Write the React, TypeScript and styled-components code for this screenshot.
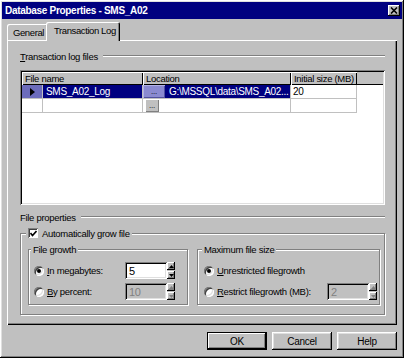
import React from "react";
import styled, { createGlobalStyle, css } from "styled-components";

const face = "#c0c0c0";
const shadow = "#808080";
const dark = "#000";
const hilite = "#fff";
const light = "#dfdfdf";
const navy = "#000080";

const GlobalStyle = createGlobalStyle`
  html, body { margin: 0; padding: 0; background: ${face}; }
  body { width: 404px; height: 358px; overflow: hidden; font-family: "Liberation Sans", Arial, sans-serif; }
  * { box-sizing: border-box; }
`;

const raised = css`
  box-shadow: inset -1px -1px ${dark}, inset 1px 1px ${hilite}, inset -2px -2px ${shadow}, inset 2px 2px ${light};
`;
const raisedThin = css`
  box-shadow: inset -1px -1px ${dark}, inset 1px 1px ${hilite}, inset -2px -2px ${shadow};
`;
const sunken = css`
  box-shadow: inset 1px 1px ${shadow}, inset -1px -1px ${hilite}, inset 2px 2px ${dark}, inset -2px -2px ${light};
`;

const Window = styled.div`
  width: 404px;
  height: 358px;
  padding: 2px;
  background: ${face};
  ${raised}
  display: flex;
  flex-direction: column;
  font-size: 9.5px;
  letter-spacing: -0.3px;
  color: #000;
`;

const TitleBar = styled.div`
  height: 17px;
  background: ${navy};
  color: #fff;
  display: flex;
  align-items: center;
  justify-content: space-between;
  padding: 0 2px 0 3px;
`;

const TitleText = styled.span`
  font-weight: bold;
  font-size: 10px;
  letter-spacing: -0.3px;
`;

const CloseButton = styled.div`
  width: 12px;
  height: 11px;
  background: ${face};
  ${raisedThin}
  display: flex;
  align-items: center;
  justify-content: center;
  padding-bottom: 1px;
`;

const Body = styled.div`
  flex: 1;
  display: flex;
  flex-direction: column;
  padding: 3px 5px 0 5px;
`;

const TabStrip = styled.div`
  height: 18px;
  display: flex;
  align-items: flex-end;
`;

const Tab = styled.div<{ $active?: boolean; $w: number }>`
  position: relative;
  z-index: ${(p) => (p.$active ? 2 : 1)};
  width: ${(p) => p.$w}px;
  height: ${(p) => (p.$active ? 19 : 16)}px;
  margin-left: ${(p) => (p.$active ? -2 : 0)}px;
  margin-bottom: ${(p) => (p.$active ? -1 : 0)}px;
  padding-left: ${(p) => (p.$active ? 8 : 6)}px;
  padding-bottom: ${(p) => (p.$active ? 2 : 0)}px;
  background: ${face};
  border-radius: 2px 2px 0 0;
  box-shadow: inset 1px 1px ${hilite}, inset -1px 0 ${dark}, inset -2px 0 ${shadow};
  display: flex;
  align-items: center;
  white-space: nowrap;
  letter-spacing: -0.4px;
`;

const Panel = styled.div`
  height: 285px;
  background: ${face};
  box-shadow: inset 1px 1px ${hilite}, inset -1px -1px ${dark}, inset -2px -2px ${shadow};
  padding: 10px 12px 0 13px;
  display: flex;
  flex-direction: column;
`;

const SectionHeader = styled.div<{ $mt?: number }>`
  height: 12px;
  margin-top: ${(p) => p.$mt ?? 0}px;
  display: flex;
  align-items: center;
  white-space: nowrap;
`;

const Rule = styled.div`
  flex: 1;
  height: 2px;
  margin-left: 5px;
  border-top: 1px solid ${shadow};
  border-bottom: 1px solid ${hilite};
`;

const U = styled.span`
  text-decoration: underline;
  text-underline-offset: 1px;
`;

const GridBox = styled.div`
  margin-top: 8px;
  height: 135px;
  background: #fff;
  padding: 2px;
  ${sunken}
`;

const Grid = styled.div`
  display: grid;
  grid-template-columns: 21px 100px 148px 66px 1fr;
  grid-template-rows: 13px 14px 14px;
`;

const HeaderCell = styled.div<{ $span?: number }>`
  grid-column: span ${(p) => p.$span ?? 1};
  background: ${face};
  box-shadow: inset 1px 1px ${hilite}, inset -1px -1px ${dark};
  padding-left: 3px;
  display: flex;
  align-items: center;
  white-space: nowrap;
`;

const HeaderFill = styled.div`
  background: ${face};
  box-shadow: inset 0 -1px ${dark};
`;

const SelectorCell = styled.div<{ $selected?: boolean }>`
  background: ${(p) => (p.$selected ? "#6c6cbc" : "#fff")};
  border-right: 1px solid ${face};
  border-bottom: 1px solid ${face};
  display: flex;
  align-items: center;
  padding-left: 8px;
`;

const Cell = styled.div<{ $selected?: boolean }>`
  background: ${(p) => (p.$selected ? navy : "#fff")};
  color: ${(p) => (p.$selected ? "#fff" : "#000")};
  border-right: 1px solid ${face};
  border-bottom: 1px solid ${face};
  display: flex;
  align-items: center;
  padding-left: ${(p) => (p.$selected ? 3 : 2)}px;
  white-space: nowrap;
  overflow: hidden;
  font-size: 10px;
`;

const LocationCell = styled(Cell)`
  padding-left: 0;
  gap: 4px;
`;

const Blank = styled.div`
  background: #fff;
`;

const Ellipsis = styled.div<{ $selected?: boolean }>`
  width: ${(p) => (p.$selected ? 22 : 14)}px;
  height: 13px;
  margin-left: ${(p) => (p.$selected ? 0 : 2)}px;
  background: ${(p) => (p.$selected ? "#8a8ad0" : face)};
  color: #000;
  box-shadow: ${(p) =>
    p.$selected
      ? "inset 1px 1px #b0b0e6, inset -1px -1px #5050a0"
      : `inset 1px 1px ${hilite}, inset -1px -1px ${shadow}`};
  display: flex;
  justify-content: center;
  align-items: flex-end;
  padding-bottom: 2px;
  font-size: 8px;
  line-height: 8px;
`;

const AutoGroup = styled.fieldset`
  margin: 4px 0 0 0;
  padding: 0;
  border: 1px solid ${shadow};
  box-shadow: inset 1px 1px ${hilite}, 1px 1px ${hilite};
  min-width: 0;
`;

const Legend = styled.legend<{ $ml: number }>`
  margin-left: ${(p) => p.$ml}px;
  padding: 0 2px;
  height: 12px;
  background: ${face};
  display: flex;
  align-items: center;
  gap: 4px;
  white-space: nowrap;
`;

const GroupRow = styled.div`
  display: flex;
  gap: 9px;
  padding: 4px 4px 9px 7px;
`;

const Group = styled.fieldset<{ $w: number }>`
  width: ${(p) => p.$w}px;
  margin: 0;
  padding: 0;
  border: 1px solid ${shadow};
  box-shadow: inset 1px 1px ${hilite}, 1px 1px ${hilite};
  min-width: 0;
`;

const GroupBody = styled.div<{ $label: number; $pl: number }>`
  display: grid;
  grid-template-columns: ${(p) => p.$label}px auto;
  grid-auto-rows: 17px;
  row-gap: 4px;
  padding: 7px 0 4px ${(p) => p.$pl}px;
`;

const OptionLabel = styled.div`
  display: flex;
  align-items: center;
  gap: 3px;
  white-space: nowrap;
`;

const Radio = styled.span<{ $checked?: boolean }>`
  width: 10px;
  height: 10px;
  border-radius: 50%;
  background: #fff;
  box-shadow: inset 1px 1px ${shadow}, inset -1px -1px ${hilite}, inset 2px 2px #404040, inset -2px -2px ${light};
  display: flex;
  align-items: center;
  justify-content: center;
  flex: none;
  &::after {
    content: "";
    width: 4px;
    height: 4px;
    border-radius: 50%;
    background: #000;
    display: ${(p) => (p.$checked ? "block" : "none")};
  }
`;

const CheckBox = styled.span`
  width: 10px;
  height: 10px;
  background: #fff;
  box-shadow: inset 1px 1px ${shadow}, inset -1px -1px ${hilite}, inset 2px 2px #404040;
  display: flex;
  align-items: center;
  justify-content: center;
  flex: none;
  padding: 1px 0 0 1px;
`;

const Spin = styled.div`
  display: flex;
  height: 17px;
`;

const SpinInput = styled.div<{ $disabled?: boolean }>`
  width: 42px;
  height: 17px;
  background: ${(p) => (p.$disabled ? face : "#fff")};
  color: ${(p) => (p.$disabled ? shadow : "#000")};
  ${sunken}
  padding: 1px 0 0 4px;
  display: flex;
  align-items: center;
  font-size: 11px;
`;

const SpinButtons = styled.div`
  width: 8px;
  display: flex;
  flex-direction: column;
  gap: 1px;
`;

const SpinButton = styled.div`
  flex: 1;
  background: ${face};
  ${raisedThin}
  display: flex;
  align-items: center;
  justify-content: center;
`;

const ButtonRow = styled.div`
  margin-top: 7px;
  display: flex;
  justify-content: flex-end;
  gap: 5px;
`;

const Button = styled.div<{ $default?: boolean }>`
  width: 60px;
  height: 18px;
  background: ${face};
  box-shadow: ${(p) =>
    p.$default
      ? `inset 0 0 0 1px ${dark}, inset -2px -2px ${dark}, inset 2px 2px ${hilite}, inset -3px -3px ${shadow}`
      : `inset -1px -1px ${dark}, inset 1px 1px ${hilite}, inset -2px -2px ${shadow}, inset 2px 2px ${light}`};
  display: flex;
  align-items: center;
  justify-content: center;
  font-size: 10px;
`;

const Arrow = ({ dir, disabled }: { dir: "up" | "down"; disabled?: boolean }) => (
  <svg width="5" height="3" viewBox="0 0 5 3">
    <polygon
      points={dir === "up" ? "2.5,0 5,3 0,3" : "0,0 5,0 2.5,3"}
      fill={disabled ? shadow : "#000"}
    />
  </svg>
);

const SpinBox = ({ value, disabled }: { value: string; disabled?: boolean }) => (
  <Spin>
    <SpinInput $disabled={disabled}>{value}</SpinInput>
    <SpinButtons>
      <SpinButton>
        <Arrow dir="up" disabled={disabled} />
      </SpinButton>
      <SpinButton>
        <Arrow dir="down" disabled={disabled} />
      </SpinButton>
    </SpinButtons>
  </Spin>
);

export default function App() {
  return (
    <>
      <GlobalStyle />
      <Window>
        <TitleBar>
          <TitleText>Database Properties - SMS_A02</TitleText>
          <CloseButton>
            <svg width="8" height="7" viewBox="0 0 8 7">
              <path d="M1 0.5 L7 6.5 M7 0.5 L1 6.5" stroke="#000" strokeWidth="1.6" />
            </svg>
          </CloseButton>
        </TitleBar>
        <Body>
          <TabStrip>
            <Tab $w={41}>General</Tab>
            <Tab $active $w={74}>
              Transaction Log
            </Tab>
          </TabStrip>
          <Panel>
            <SectionHeader>
              <span>
                <U>T</U>ransaction log files
              </span>
              <Rule />
            </SectionHeader>
            <GridBox>
              <Grid>
                <HeaderCell $span={2}>File name</HeaderCell>
                <HeaderCell>Location</HeaderCell>
                <HeaderCell>Initial size (MB)</HeaderCell>
                <HeaderFill />

                <SelectorCell $selected>
                  <svg width="5" height="8" viewBox="0 0 5 8">
                    <polygon points="0,0 5,4 0,8" fill="#000" />
                  </svg>
                </SelectorCell>
                <Cell $selected>SMS_A02_Log</Cell>
                <LocationCell $selected>
                  <Ellipsis $selected>...</Ellipsis>
                  <span>{"G:\\MSSQL\\data\\SMS_A02..."}</span>
                </LocationCell>
                <Cell>20</Cell>
                <Blank />

                <SelectorCell />
                <Cell />
                <LocationCell>
                  <Ellipsis>...</Ellipsis>
                </LocationCell>
                <Cell />
                <Blank />
              </Grid>
            </GridBox>

            <SectionHeader $mt={6}>
              <span>File properties</span>
              <Rule />
            </SectionHeader>

            <AutoGroup>
              <Legend $ml={5}>
                <CheckBox>
                  <svg width="7" height="7" viewBox="0 0 7 7">
                    <path d="M0.5 3 L2.5 5.5 L6.5 1" stroke="#000" strokeWidth="1.6" fill="none" />
                  </svg>
                </CheckBox>
                <span>Automatically grow file</span>
              </Legend>
              <GroupRow>
                <Group $w={160}>
                  <Legend $ml={2}>File growth</Legend>
                  <GroupBody $label={91} $pl={5}>
                    <OptionLabel>
                      <Radio $checked />
                      <span>
                        <U>I</U>n megabytes:
                      </span>
                    </OptionLabel>
                    <SpinBox value="5" />
                    <OptionLabel>
                      <Radio />
                      <span>
                        <U>B</U>y percent:
                      </span>
                    </OptionLabel>
                    <SpinBox value="10" disabled />
                  </GroupBody>
                </Group>
                <Group $w={183}>
                  <Legend $ml={4}>Maximum file size</Legend>
                  <GroupBody $label={123} $pl={6}>
                    <OptionLabel>
                      <Radio $checked />
                      <span>
                        <U>U</U>nrestricted filegrowth
                      </span>
                    </OptionLabel>
                    <span />
                    <OptionLabel>
                      <Radio />
                      <span>
                        <U>R</U>estrict filegrowth (MB):
                      </span>
                    </OptionLabel>
                    <SpinBox value="2" disabled />
                  </GroupBody>
                </Group>
              </GroupRow>
            </AutoGroup>
          </Panel>
          <ButtonRow>
            <Button $default>OK</Button>
            <Button>Cancel</Button>
            <Button>Help</Button>
          </ButtonRow>
        </Body>
      </Window>
    </>
  );
}
